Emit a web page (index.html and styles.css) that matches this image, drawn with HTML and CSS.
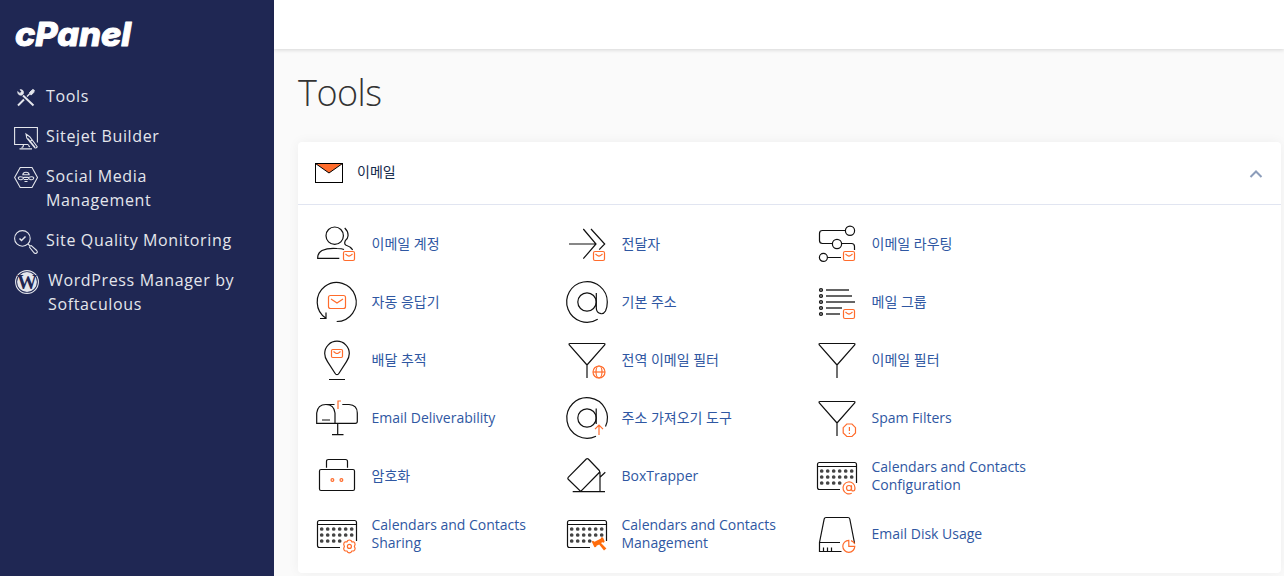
FILE: index.html
```html
<!DOCTYPE html>
<html lang="ko">
<head>
  <meta charset="UTF-8">
  <meta name="viewport" content="width=device-width, initial-scale=1.0">
  <title>cPanel - Tools</title>
  <link rel="stylesheet" href="styles.css">
</head>
<body>
  <!-- shared icon parts -->
  <svg class="defs" width="0" height="0">
    <symbol id="badge-mail" viewBox="0 0 48 48">
      <rect x="30.5" y="31.5" width="11" height="9" rx="1.5"/>
      <path d="M32.5 34l2 1.6q1.5 1 3 0l2-1.6"/>
    </symbol>
    <symbol id="funnel" viewBox="0 0 48 48">
      <path d="M7 7.500h34q1.500 0 .7 1.500L24 29 6.300 9Q5.500 7.500 7 7.500zM24 29v13"/>
    </symbol>
    <symbol id="calendar" viewBox="0 0 48 48">
      <path d="M27 37.500H6.500q-2 0-2-2v-23q0-2 2-2h35q2 0 2 2V31M4.500 14.500h39"/>
      <path class="dots" d="M8.700 19h30.100M8.700 25h30.100M8.700 31h18.100"/>
    </symbol>
  </svg>

  <div class="layout">
    <nav class="sidebar">
      <svg class="logo" width="132" height="36" viewBox="0 0 132 36">
        <text x="1" y="29" textLength="116" lengthAdjust="spacingAndGlyphs">cPanel</text>
      </svg>
      <ul class="menu">
        <li>
          <svg class="menu-icon" viewBox="0 0 24 24">
            <path d="M9 9.500l10.500 10" stroke-width="2"/>
            <path d="M3.600 5.500c0 3 2 4.300 4.600 3.500L9.500 7.500C10 5 8.500 3.400 6 3.600l1.500 2-1.500 1.800z" fill="currentColor" stroke-width=".6"/>
            <path d="M4 19.500l6-6" stroke-width="2"/>
            <path d="M13 10.500l3-3" stroke-width="1.500"/>
            <path d="M15.500 6.500l3.300-3 1.500.8-.6 2.200-2.600 2.600z" fill="currentColor" stroke-width="1"/>
          </svg>
          <span>Tools</span>
        </li>
        <li>
          <svg class="menu-icon" viewBox="0 0 24 24">
            <path d="M14 18.500H.600v-17h22.800v15M9.500 18.500q0 3-2 3M5.500 22.900h12.500M14.500 18.500q0 2 1.500 2.500"/>
            <path d="M12 8l.8 4 8 9.700q1.500.8 2.400-1l-7.500-10zM14 12.500l7 8.500"/>
            <path d="M18 14l-2.500 2"/>
          </svg>
          <span>Sitejet Builder</span>
        </li>
        <li>
          <svg class="menu-icon" viewBox="0 0 24 24">
            <path d="M6.200 1.500h11.800l5.500 10-5.500 10H6.200L.6 11.500z"/>
            <path d="M8.800 8.800Q9 6.300 12 6.300t3.200 2.500zM10 11.400h4M9.800 13.500h4.400M10.500 15.500h3"/>
            <path d="M9.800 11.400q-4.500-1.500-5.500.3 0 2.300 3 2 2.300-.4 2.500-2.300zM14.200 11.400q4.500-1.500 5.500.3 0 2.300-3 2-2.300-.4-2.500-2.300z"/>
          </svg>
          <span>Social Media Management</span>
        </li>
        <li>
          <svg class="menu-icon" viewBox="0 0 24 24">
            <circle cx="8.400" cy="8.400" r="7.800"/>
            <path d="M5.500 8.500l2 2 4-4" stroke-width="1.500"/>
            <path d="M13.800 14l2.200 1.800M15.600 17.300q0-1.700 1.600-1.800l5.500 5q1.200 1.500 0 2.500t-2.400 0z"/>
          </svg>
          <span>Site Quality Monitoring</span>
        </li>
        <li class="wp">
          <svg class="menu-icon" viewBox="0 0 24 24">
            <circle cx="12" cy="12" r="11.400"/>
            <circle cx="12" cy="12" r="9.900" fill="currentColor" stroke="none"/>
            <text class="wp-mark" x="12" y="19" text-anchor="middle" textLength="20" lengthAdjust="spacingAndGlyphs">W</text>
          </svg>
          <span>WordPress Manager by Softaculous</span>
        </li>
      </ul>
    </nav>

    <main class="main">
      <header class="topbar"></header>
      <div class="page">
        <h1>Tools</h1>
        <section class="card">
          <div class="card-header">
            <svg class="group-icon" width="28" height="20" viewBox="0 0 28 20">
              <path d="M.5.500h27L14 10z" fill="#ff6c2c"/>
              <rect x=".5" y=".5" width="27" height="19"/>
            </svg>
            <h2>이메일</h2>
            <svg class="chevron" width="14" height="10" viewBox="0 0 14 10">
              <path d="M1.500 8L7 2.500 12.500 8"/>
            </svg>
          </div>

          <div class="tools">
            <a class="tool">
              <svg class="icon" viewBox="0 0 48 48">
                <circle cx="21.700" cy="15.700" r="8.700"/>
                <path d="M31.700 8q3.800 3.500 3.300 8-.3 3-2.600 4.500-1.500 3 .3 4.500 4.500 1.500 7 4.800M26.300 38.300H4.700Q4.500 33 9 30.500q6-2.800 15-2 5 .2 7 1"/>
                <use class="accent" href="#badge-mail"/>
              </svg>
              <span>이메일 계정</span>
            </a>
            <a class="tool">
              <svg class="icon" viewBox="0 0 48 48">
                <path d="M6 24h27M20.300 9L33 24 20.300 38.700M28 9l13.700 15-5.500 5.700"/>
                <use class="accent" href="#badge-mail"/>
              </svg>
              <span>전달자</span>
            </a>
            <a class="tool">
              <svg class="icon" viewBox="0 0 48 48">
                <circle cx="37" cy="10.700" r="4.600"/>
                <circle cx="24" cy="24" r="4.600"/>
                <circle cx="10.400" cy="37.400" r="4"/>
                <path d="M32.300 10.500H9.500q-3 0-3 3v7q0 3 3 3h9.800M28.700 23.500h9.800q3 0 3 3V30M14.500 37.500H28"/>
                <use class="accent" href="#badge-mail"/>
              </svg>
              <span>이메일 라우팅</span>
            </a>

            <a class="tool">
              <svg class="icon" viewBox="0 0 48 48">
                <path d="M13 40.300A19.500 19.500 0 1 1 23.700 43.500M7 40.500h6v-6"/>
                <g class="accent">
                  <rect x="15.500" y="17.500" width="17" height="13" rx="2"/>
                  <path d="M18 21l6 4 6-4"/>
                </g>
              </svg>
              <span>자동 응답기</span>
            </a>
            <a class="tool">
              <svg class="icon" viewBox="0 0 48 48">
                <circle cx="24" cy="24" r="9.200"/>
                <path d="M34.700 41.200A20.300 20.300 0 1 1 44.300 24q0 5-1.800 9-1.700 3-4.500 2.700-4.700-.7-4.700-5.700V15"/>
              </svg>
              <span>기본 주소</span>
            </a>
            <a class="tool">
              <svg class="icon" viewBox="0 0 48 48">
                <g class="bullets">
                  <circle cx="8" cy="12" r="1.400"/>
                  <circle cx="8" cy="18" r="1.400"/>
                  <circle cx="8" cy="24" r="1.400"/>
                  <circle cx="8" cy="30" r="1.400"/>
                  <circle cx="8" cy="36" r="1.400"/>
                </g>
                <path class="lines" d="M13 12h23M13 18h26M13 24h29M13 30h16M13 36h14"/>
                <use class="accent" href="#badge-mail"/>
              </svg>
              <span>메일 그룹</span>
            </a>

            <a class="tool">
              <svg class="icon" viewBox="0 0 48 48">
                <path d="M24 38.700q-1.200 0-2-1.500l-7.500-11.500Q11.700 21.500 11.700 17.500a12.300 12.300 0 0 1 24.600 0q0 4-2.800 8.200L26 37.200q-.8 1.500-2 1.500zM16 43.500h16"/>
                <g class="accent">
                  <rect x="18.500" y="13.500" width="11" height="8" rx="1.200"/>
                  <path d="M20.500 15.500l2 1.500q1.500 1 3 0l2-1.500"/>
                </g>
              </svg>
              <span>배달 추적</span>
            </a>
            <a class="tool">
              <svg class="icon" viewBox="0 0 48 48">
                <use href="#funnel"/>
                <g class="accent">
                  <circle cx="36" cy="36" r="6"/>
                  <ellipse cx="36" cy="36" rx="3" ry="6"/>
                  <path d="M30 36h12"/>
                </g>
              </svg>
              <span>전역 이메일 필터</span>
            </a>
            <a class="tool">
              <svg class="icon" viewBox="0 0 48 48"><use href="#funnel"/></svg>
              <span>이메일 필터</span>
            </a>

            <a class="tool">
              <svg class="icon" viewBox="0 0 48 48">
                <path d="M3.700 29.300V19q1-8.500 9.200-8.500T22 19v10.300zM13 10.500h8.500M29.300 10.500H36q8.300.5 8.300 8.500v8.500q0 1.800-2 1.800H22M9 26h8M24.700 29.300v11.400M19 40.700h11.500"/>
                <path class="accent" d="M25 15V7h3"/>
              </svg>
              <span>Email Deliverability</span>
            </a>
            <a class="tool">
              <svg class="icon" viewBox="0 0 48 48">
                <circle cx="24" cy="24" r="9.200"/>
                <path d="M33.200 14.500v15.500M42.500 32.500A20.300 20.300 0 1 0 33 42.200"/>
                <path class="accent" d="M36 41v-9.500M32 35.200l4-4 4 4"/>
              </svg>
              <span>주소 가져오기 도구</span>
            </a>
            <a class="tool">
              <svg class="icon" viewBox="0 0 48 48">
                <use href="#funnel"/>
                <path class="accent" d="M33.800 30h5.200l3.500 3.700v5.200L39 42.500h-5.200L30.200 39v-5.300zM36.400 33v4M36.400 38.800v1.200"/>
              </svg>
              <span>Spam Filters</span>
            </a>

            <a class="tool">
              <svg class="icon" viewBox="0 0 48 48">
                <rect x="6.500" y="17.500" width="35" height="21" rx="1.500"/>
                <path d="M13.500 15.700V9.500q0-2 2-2h17q2 0 2 2v6.200"/>
                <g class="accent">
                  <circle cx="19.400" cy="28" r="1.400"/>
                  <circle cx="28.400" cy="28" r="1.400"/>
                </g>
              </svg>
              <span>암호화</span>
            </a>
            <a class="tool">
              <svg class="icon" viewBox="0 0 48 48">
                <path d="M25.300 7l11 11.500q.8 1 0 2L17.700 39.500 5.200 27.300q-.8-1 0-2L23.300 7q1-.8 2 0zM9.700 39.700H42M37 20v19.700M37 25.300l5.300-5"/>
              </svg>
              <span>BoxTrapper</span>
            </a>
            <a class="tool">
              <svg class="icon" viewBox="0 0 48 48">
                <use href="#calendar"/>
                <g class="accent">
                  <circle cx="36" cy="36" r="2.500"/>
                  <path d="M38.700 41.300A6 6 0 1 1 42 36q0 3-1.800 3t-1.700-2v-3.700"/>
                </g>
              </svg>
              <span>Calendars and Contacts Configuration</span>
            </a>

            <a class="tool">
              <svg class="icon" viewBox="0 0 48 48">
                <use href="#calendar"/>
                <g class="accent">
                  <circle cx="36.400" cy="36.400" r="2"/>
                  <path d="M34.800 30.500q1.600-1 3.200 0l.8 1.300h1.800q1.500.8 1.500 2.600l-.7 2 .7 2q0 1.700-1.500 2.600h-1.800L38 42.300q-1.600 1-3.200 0L34 41h-1.800q-1.500-.9-1.500-2.600l.7-2-.7-2q0-1.800 1.500-2.600H34z"/>
                </g>
              </svg>
              <span>Calendars and Contacts Sharing</span>
            </a>
            <a class="tool">
              <svg class="icon" viewBox="0 0 48 48">
                <use href="#calendar"/>
                <path class="solid" d="M28.700 31.500l1.300-.7 1.500 1 6.500-3.300.3-1.300 1.700.3 1.700 4-1 1.200-1.300-.4-1.400.8 5.400 5.500-2.400 2-4.800-6.200-2.700 1.300-.4 1.300-1.600.3-.7-1.300z"/>
              </svg>
              <span>Calendars and Contacts Management</span>
            </a>
            <a class="tool">
              <svg class="icon" viewBox="0 0 48 48">
                <path d="M28.500 41.500h-22v-9l4.700-23.500q.4-1.500 1.800-1.500h22q1.500 0 1.800 1.500l4.700 24M6.500 32.500H27M10.500 41.500v-4M14.500 41.500v-4M18.500 41.500v-4"/>
                <path class="accent" d="M35.800 30.300a6 6 0 1 0 6 6h-6zM38 30.700q3 .8 3.800 3.500"/>
              </svg>
              <span>Email Disk Usage</span>
            </a>
          </div>
        </section>
      </div>
    </main>
  </div>
</body>
</html>
```
FILE: styles.css
```css
* {
  box-sizing: border-box;
}

body {
  margin: 0;
  height: 100vh;
  overflow: hidden;
  background: #fafafa;
  font-family: 'Open Sans', 'Noto Sans CJK KR', sans-serif;
  font-size: 14px;
  color: #333;
}

.defs {
  display: block;
}

.layout {
  display: flex;
  height: 100vh;
}

/* Sidebar */
.sidebar {
  flex: 0 0 274px;
  background: #1f2753;
  color: #e4e6ec;
  padding: 17px 14px 0;
}

.logo {
  display: block;
}

.logo text {
  font-family: 'Inter', sans-serif;
  font-size: 33px;
  font-weight: 800;
  font-style: italic;
  fill: #fff;
  stroke: #fff;
  stroke-width: 1;
  stroke-linejoin: round;
}

.menu {
  list-style: none;
  margin: 31px 0 0;
  padding: 0;
  display: flex;
  flex-direction: column;
  gap: 16px;
}

.menu li {
  display: flex;
  align-items: flex-start;
  gap: 8px;
  width: 222px;
  font-size: 16px;
  line-height: 24px;
  letter-spacing: 0.64px;
}

.menu .wp {
  padding-left: 1px;
  gap: 9px;
}

.menu-icon {
  flex: 0 0 24px;
  height: 24px;
  margin: 2px 0 -2px;
  fill: none;
  stroke: currentColor;
  stroke-width: 1.1;
}

.wp-mark {
  font-family: 'Liberation Serif', serif;
  font-size: 20px;
  font-weight: bold;
  letter-spacing: 0;
  fill: #1f2753;
  stroke: none;
}

/* Main area */
.main {
  flex: 1;
  min-width: 0;
}

.topbar {
  height: 49px;
  background: #fff;
  box-shadow: 0 1px 4px rgba(0, 0, 0, 0.15);
}

.page {
  padding: 19px 3px 0 24px;
}

h1 {
  margin: 0 0 24px;
  font-size: 36px;
  font-weight: 300;
  line-height: 50px;
  letter-spacing: -0.5px;
}

.card {
  height: 431px;
  background: #fff;
  border-radius: 4px;
  box-shadow: 0 0 12px rgba(0, 0, 0, 0.05);
}

.card-header {
  display: flex;
  align-items: center;
  height: 63px;
  padding: 0 18px 0 17px;
  border-bottom: 1px solid #e1e5f1;
}

.card-header h2 {
  margin: 0 0 4px 14px;
  font-size: 14px;
  font-weight: 400;
  color: #13294b;
}

.group-icon {
  fill: none;
  stroke: #000;
}

.chevron {
  margin: 1px 0 0 auto;
  fill: none;
  stroke: #8c9dba;
  stroke-width: 2;
}

.tools {
  display: grid;
  grid-template-columns: repeat(3, 250px);
  grid-auto-rows: 58px;
  padding: 10px 15px 0;
}

.tool {
  display: flex;
  align-items: center;
  gap: 10.5px;
  padding-right: 20px;
  color: #2f57a2;
  line-height: 18px;
}

/* Tool icons */
.icon {
  flex: 0 0 48px;
  height: 48px;
  fill: none;
  stroke: #111;
  stroke-width: 1.2;
}

.icon .accent {
  stroke: #ff6c2c;
}

.icon .solid {
  fill: #ff6c0c;
  stroke: none;
}

.bullets {
  stroke-width: 1.4;
}

.lines {
  stroke: #333;
  stroke-width: 1.4;
}

.dots {
  stroke: #444;
  stroke-width: 3.7;
  stroke-linecap: round;
  stroke-dasharray: 0 6;
}
```
